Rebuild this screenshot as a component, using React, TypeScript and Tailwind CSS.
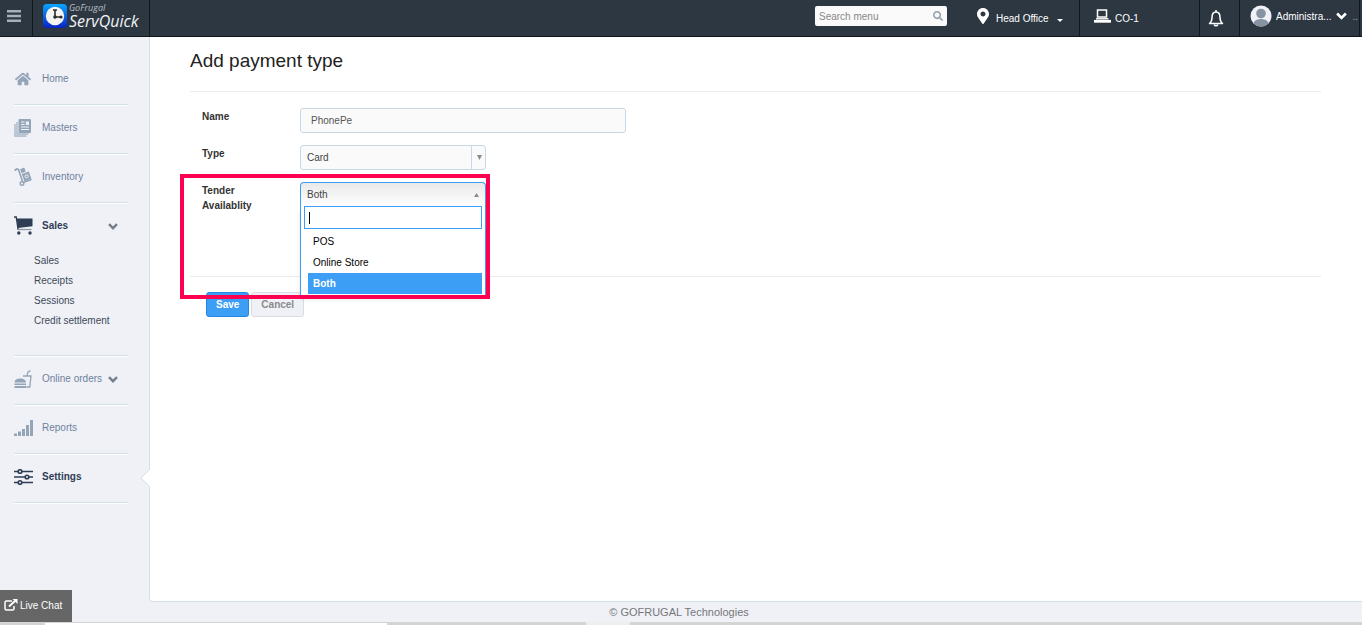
import { useState } from 'react';
import { FaHome, FaMapMarkerAlt, FaSearch } from 'react-icons/fa';

const submenu = ['Sales', 'Receipts', 'Sessions', 'Credit settlement'];
const tenderOptions = ['POS', 'Online Store', 'Both'];

const MenuIcon = () => (
  <svg viewBox="0 0 14 12" className="h-3 w-3.5" fill="#a4b0bc">
    <path d="M0 0h14v2.500H0zM0 4.700h14v2.500H0zM0 9.400h14v2.500H0z" />
  </svg>
);

const Chevron = ({ className }: { className: string }) => (
  <svg viewBox="0 0 10 7" className={className} fill="none" stroke="currentColor" strokeWidth="2.400">
    <path d="M1 1.200l4 4 4-4" />
  </svg>
);

const MastersIcon = () => (
  <svg viewBox="0 0 18 18" className="w-[18px] h-[18px]" fill="none">
    <path d="M1 5v12h11.500M3 3v12h11.500" stroke="#a9b7c7" strokeWidth="1.400" />
    <rect x="4.500" y="0" width="12.500" height="14" rx="1" fill="#94a5b8" />
    <path d="M7 3h3.500M7 5.500h3.500M7 8h8M7 10.500h8" stroke="#eff1f7" strokeWidth="1.200" />
    <rect x="11.800" y="2.500" width="3.200" height="3.500" fill="#eff1f7" />
  </svg>
);

const InventoryIcon = () => (
  <svg viewBox="0 0 18 19" className="w-[18px] h-[19px]" fill="none">
    <path d="M1 3.500L2.500 1.800l2 .6 4 12" stroke="#94a5b8" strokeWidth="1.600" />
    <circle cx="1.500" cy="3" r="1.100" fill="#94a5b8" />
    <path d="M6.200 2.200l4-1.600 1.500 4-4.200 1.600z" fill="#94a5b8" />
    <path d="M7.800 7l7-2.400 2.600 7.200-7 2.500z" fill="#94a5b8" />
    <circle cx="12.600" cy="9.400" r="1.600" stroke="#eff1f7" strokeWidth="1" />
    <path d="M9 15.500l8.500-3" stroke="#94a5b8" strokeWidth="1.500" />
    <circle cx="8" cy="16.500" r="1.800" stroke="#94a5b8" strokeWidth="1.400" />
  </svg>
);

const CartIcon = () => (
  <svg viewBox="0 0 19 19" className="w-[19px] h-[19px]">
    <path d="M0 1h2.200l2 13" fill="none" stroke="#2f3d54" strokeWidth="1.400" />
    <path d="M4 13.500h13.500" stroke="#8d97a6" strokeWidth="1.300" />
    <path d="M2.800 2.500h15.700v7.800L4 12z" fill="#2f3d54" />
    <circle cx="4.800" cy="17" r="1.700" fill="#2f3d54" />
    <circle cx="16" cy="17" r="1.700" fill="#2f3d54" />
  </svg>
);

const BurgerIcon = () => (
  <svg viewBox="0 0 18 18" className="w-[18px] h-[18px]" fill="none">
    <path d="M9 6h8l-1.200 11h-3.500M13 6l.8-3.800L16.500.6" stroke="#94a5b8" strokeWidth="1.300" />
    <path d="M0.500 12.500c0-5.500 11.500-5.500 11.500 0zM0.500 13.500H12V15H0.500zM0.500 16H12v2H0.500z" fill="#94a5b8" />
  </svg>
);

const ReportsIcon = () => (
  <svg viewBox="0 0 19 16" className="w-[19px] h-[16px]" fill="#94a5b8">
    <path d="M0 13.500h3V16H0zM4 11.500h3V16H4zM8 9h3v7H8zM12 5h3v11h-3zM16 0h3v16h-3z" />
  </svg>
);

const SettingsIcon = () => (
  <svg viewBox="0 0 19 16" className="w-[19px] h-[16px]" stroke="#2f3d54" strokeWidth="1.600" fill="#eff1f7">
    <path d="M0 2.500h19M0 8h19M0 13.500h19" />
    <circle cx="6" cy="2.500" r="1.800" />
    <circle cx="13" cy="8" r="1.800" />
    <circle cx="6" cy="13.500" r="1.800" />
  </svg>
);

const LogoMark = () => (
  <svg viewBox="0 0 24 24" className="w-[24px] h-[24px] shrink-0">
    <defs>
      <linearGradient id="mark" x1="0" y1="0" x2="0" y2="1">
        <stop offset="0" stopColor="#08a6ff" />
        <stop offset="1" stopColor="#0b22c4" />
      </linearGradient>
    </defs>
    <rect width="24" height="24" rx="4" fill="url(#mark)" />
    <circle cx="12" cy="12" r="9.200" fill="#f4f4f2" />
    <path d="M10 6h4M12 6v7M12 13h6" stroke="#2b2b2b" strokeWidth="1.600" fill="none" />
    <circle cx="12" cy="13" r="1.800" fill="#2b2b2b" />
    <circle cx="18" cy="13" r="1.600" fill="#2b2b2b" />
  </svg>
);

const TerminalIcon = () => (
  <svg viewBox="0 0 17 14" className="w-[17px] h-[14px]" fill="none" stroke="#fff">
    <rect x="3.500" y="1" width="9" height="7" strokeWidth="1.500" />
    <path d="M2 9.800h12.500" strokeWidth="1.400" />
    <path d="M0 12.300h17" strokeWidth="2.800" />
  </svg>
);

const BellIcon = () => (
  <svg viewBox="0 0 16 17" className="w-[16px] h-[17px]" fill="none" stroke="#fff" strokeWidth="1.500">
    <path d="M8 2C5 2 4 4.500 4 7.500c0 3-.8 4.600-2.500 6h13c-1.700-1.400-2.500-3-2.500-6C12 4.500 11 2 8 2z" strokeLinejoin="round" />
    <path d="M8 0v2M6.200 14.500c.3 1.700 3.300 1.700 3.600 0" />
  </svg>
);

const AvatarIcon = () => (
  <svg viewBox="0 0 22 22" className="w-[22px] h-[22px]">
    <clipPath id="face">
      <circle cx="11" cy="11" r="10.500" />
    </clipPath>
    <g clipPath="url(#face)">
      <rect width="22" height="22" fill="#eff1f7" />
      <circle cx="11" cy="8.500" r="4.800" fill="#8593a3" />
      <path d="M3 20c0-8 16-8 16 0l-3 2H6z" fill="#8593a3" />
    </g>
  </svg>
);

const ChatIcon = () => (
  <svg viewBox="0 0 14 12" className="w-[14px] h-[12px]" fill="none" stroke="#fff">
    <path d="M8 2H2.500Q1 2 1 3.500v6Q1 11 2.500 11h6q1.500 0 1.500-1.500V7" strokeWidth="1.500" />
    <path d="M5 7.500L11.500 1.500" strokeWidth="2" />
    <path d="M8.500 0H13.500V5z" fill="#fff" stroke="none" />
  </svg>
);

type NavItemProps = {
  icon: React.ReactNode;
  label: string;
  active?: boolean;
  arrow?: boolean;
};

const NavItem = ({ icon, label, active, arrow }: NavItemProps) => (
  <a
    href="#"
    className={
      active
        ? 'flex h-[47px] items-center pb-1 font-bold text-[#2f3d54]'
        : 'flex h-[47px] items-center pb-1 text-[#6f819c]'
    }
  >
    <span className="flex w-7 shrink-0 items-center text-[#94a5b8]">{icon}</span>
    <span className="flex-1">{label}</span>
    {arrow && <Chevron className="mt-0.5 mr-2.5 h-[7px] w-2.5 text-[#777f8a]" />}
  </a>
);

const Divider = () => <div className="h-0.5 border-t border-[#d5dfe8] bg-white"></div>;

const Header = () => (
  <header className="flex h-[37px] items-stretch border-b border-[#10161c] bg-[#2d3742] text-white">
    <button type="button" aria-label="Toggle menu" className="flex w-[33px] items-center justify-center border-r border-[#10161c] pr-1 pb-1">
      <MenuIcon />
    </button>
    <a href="#" className="flex w-[117px] items-start gap-0.5 border-r border-[#10161c] pt-1 pl-2.5 font-['Open_Sans'] italic">
      <LogoMark />
      <span className="flex flex-col">
        <span className="text-[9px] leading-[8px] text-[#b9bfc5]">GoFrugal</span>
        <span className="text-[16px] leading-[18px] text-[#f2f4f6]">ServQuick</span>
      </span>
    </a>

    <div className="flex flex-1 items-start justify-end pt-1.5 pr-[30px]">
      <label className="flex h-5 w-[132px] items-center rounded-xs bg-[#fafafa] px-1">
        <input
          type="text"
          aria-label="Search menu"
          placeholder="Search menu"
          className="w-full min-w-0 outline-none placeholder:text-[#888888]"
        />
        <FaSearch className="size-2.5 shrink-0 text-[#93a0ad]" />
      </label>
    </div>

    <button type="button" className="flex w-[103px] items-center border-r border-[#10161c]">
      <FaMapMarkerAlt className="mb-1 h-4 w-3" />
      <span className="ml-[7px]">Head Office</span>
      <svg viewBox="0 0 6 3" className="mt-1 ml-2 h-[3px] w-1.5" fill="#fff">
        <path d="M0 0h6L3 3z" />
      </svg>
    </button>
    <a href="#" className="flex w-[120px] items-center gap-1 border-r border-[#10161c] pl-3.5">
      <span className="mb-1">
        <TerminalIcon />
      </span>
      CO-1
    </a>
    <button type="button" aria-label="Notifications" className="flex w-10 items-center justify-center border-r border-[#10161c] pr-2">
      <BellIcon />
    </button>
    <button type="button" className="mr-0.5 flex w-[120px] items-center border-r border-[#10161c] pb-1 pl-2.5">
      <AvatarIcon />
      <span className="ml-1">Administra...</span>
      <Chevron className="ml-1 h-2 w-[11px]" />
      <span className="ml-1.5 text-[#9aa3ad]">..</span>
    </button>
  </header>
);

const Sidebar = () => (
  <nav className="w-[149px] shrink-0 pt-5 pr-[21px] pl-3.5">
    <NavItem icon={<FaHome className="ml-px size-4" />} label="Home" />
    <Divider />
    <NavItem icon={<MastersIcon />} label="Masters" />
    <Divider />
    <NavItem icon={<InventoryIcon />} label="Inventory" />
    <Divider />
    <NavItem icon={<CartIcon />} label="Sales" active arrow />
    <ul className="pb-6 pl-5 leading-5 text-[#3f4a58]">
      {submenu.map((item) => (
        <li key={item}>
          <a href="#">{item}</a>
        </li>
      ))}
    </ul>
    <Divider />
    <NavItem icon={<BurgerIcon />} label="Online orders" arrow />
    <Divider />
    <NavItem icon={<ReportsIcon />} label="Reports" />
    <Divider />
    <div className="relative">
      <NavItem icon={<SettingsIcon />} label="Settings" active />
      {/* Notch that marks the open section */}
      <svg viewBox="0 0 10 18" className="absolute top-3.5 -right-[22px] h-[18px] w-2.5">
        <path d="M10 0L1 9l9 9" fill="#fff" stroke="#d5dfe8" />
      </svg>
    </div>
    <Divider />
  </nav>
);

const TenderSelect = () => {
  const [selected, setSelected] = useState('Both');

  return (
    <div className="relative w-[186px]">
      <button
        id="tender"
        type="button"
        aria-expanded="true"
        className="flex h-[25px] w-full items-center justify-between rounded-t border border-b-0 border-[#3c9ff5] bg-linear-to-b from-[#eaeaea] to-white px-1.5 pb-px text-[#444444]"
      >
        {selected}
        <svg viewBox="0 0 5 4" className="h-1 w-[5px]" fill="#8a8a8a">
          <path d="M0 4h5L2.500 0z" />
        </svg>
      </button>
      <div className="absolute top-6 left-0 z-10 w-full border border-t-0 border-[#3c9ff5] bg-white px-[3px] pb-px shadow-md">
        <div className="relative">
          <input
            type="text"
            aria-label="Filter options"
            className="block h-[23px] w-full border border-[#3c9ff5] px-2 caret-transparent outline-none"
          />
          <span className="absolute top-1.5 left-[5px] h-3 w-px bg-black"></span>
        </div>
        <ul role="listbox" aria-label="Tender availability" className="mt-0.5 ml-1 leading-[21px] text-black">
          {tenderOptions.map((option) => (
            <li
              key={option}
              role="option"
              aria-selected={option === selected}
              onClick={() => setSelected(option)}
              className={option === selected ? 'bg-[#3c9ff5] px-[5px] font-bold text-white' : 'px-[5px]'}
            >
              {option}
            </li>
          ))}
        </ul>
      </div>
    </div>
  );
};

const PaymentForm = () => (
  <form className="relative mt-[18px]" onSubmit={(e) => e.preventDefault()}>
    <div className="border-y border-[#ebebeb] pt-4 pb-[63px] pl-3">
      <div className="flex h-[37px] items-start">
        <label htmlFor="name" className="w-[98px] shrink-0 pt-px font-bold text-[#333333]">Name</label>
        <input
          id="name"
          type="text"
          defaultValue="PhonePe"
          className="h-[25px] w-[326px] rounded-[3px] border border-[#c9d8e6] bg-[#fafafa] px-2.5 text-[#555555] outline-none"
        />
      </div>
      <div className="flex h-[37px] items-start">
        <label htmlFor="type" className="w-[98px] shrink-0 pt-px font-bold text-[#333333]">Type</label>
        <div className="relative w-[186px]">
          <select
            id="type"
            defaultValue="Card"
            className="block h-[25px] w-full appearance-none rounded-[3px] border border-[#c9d8e6] bg-[#fafafa] px-1.5 text-[#444444]"
          >
            <option>Card</option>
          </select>
          <span className="pointer-events-none absolute inset-y-0 right-0 flex w-[15px] items-center justify-center border-l border-[#c9d8e6]">
            <svg viewBox="0 0 5 5" className="size-[5px]" fill="#8a8a8a">
              <path d="M0 0h5L2.500 5z" />
            </svg>
          </span>
        </div>
      </div>
      <div className="flex items-start">
        <label htmlFor="tender" className="w-[98px] shrink-0 pt-px pr-8 font-bold text-[#333333]">Tender Availablity</label>
        <TenderSelect />
      </div>
    </div>
    <div className="flex gap-0.5 pt-[15px] pl-4">
      <button type="submit" className="h-[25px] rounded-[3px] border border-[#2088e0] bg-[#3c9ff5] px-[9px] font-bold text-white">
        Save
      </button>
      <button type="button" className="h-[25px] rounded-[3px] border border-[#d8dce3] bg-[#eff1f7] px-[9px] font-bold text-[#8a8a8a]">
        Cancel
      </button>
    </div>
    {/* Highlight around the tender row */}
    <div className="pointer-events-none absolute top-[83px] -left-2.5 z-20 h-[125px] w-[310px] border-4 border-[#ff0051]"></div>
  </form>
);

const App = () => {
  return (
    <div className="relative flex min-h-screen flex-col bg-[#eff1f7] font-['Liberation_Sans',Arial,sans-serif] text-[10px] leading-[15px]">
      <Header />
      <div className="flex flex-1">
        <Sidebar />
        <main className="flex-1 rounded-bl border-b border-l border-[#d5dfe8] bg-white pt-3 pr-[41px] pl-10">
          <h1 className="text-[19px] leading-6 text-[#222222]">Add payment type</h1>
          <PaymentForm />
        </main>
      </div>
      <footer className="flex h-5 items-center justify-center pr-1 text-[11px] text-[#777777]">
        © GOFRUGAL Technologies
      </footer>
      <div className="flex h-[3px] bg-[#d4d4d4]">
        <div className="ml-[45px] w-[342px] border-t border-[#d4d4d4] bg-white"></div>
        <div className="ml-[199px] w-11 bg-[#eeeeee]"></div>
      </div>
      <a href="#" className="absolute bottom-[3px] left-0 z-10 flex h-8 w-[72px] items-center gap-0.5 bg-[#666666] pb-0.5 pl-1 text-white">
        <ChatIcon />
        Live Chat
      </a>
    </div>
  );
};

export default App;
